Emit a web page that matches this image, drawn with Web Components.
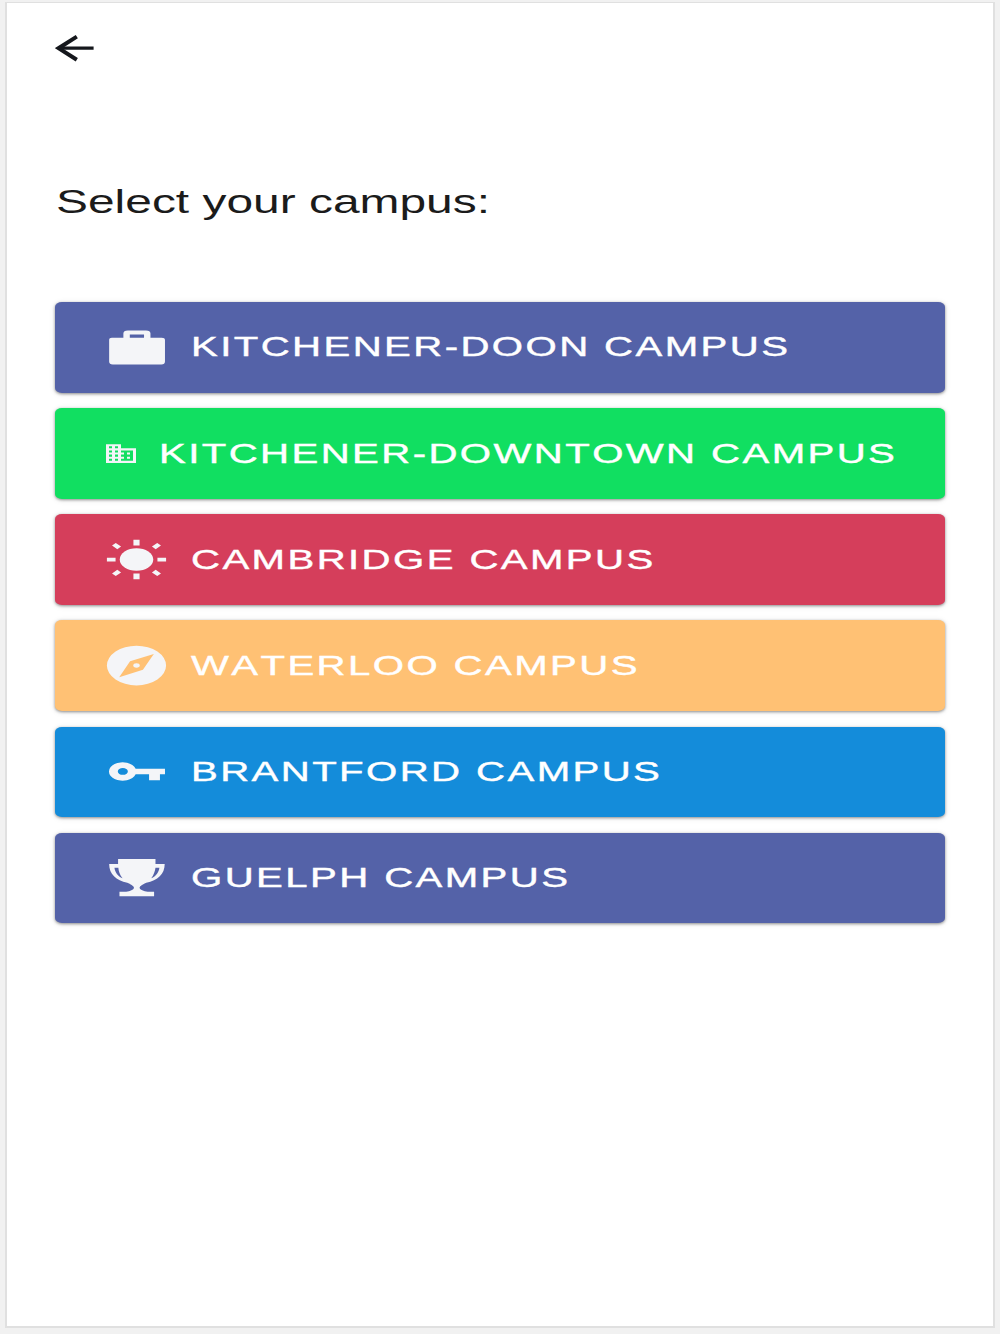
<!DOCTYPE html>
<html lang="en">
<head>
<meta charset="utf-8">
<title>Select your campus</title>
<style>
  body {
    margin: 0;
    background: #f1f1f1;
    font-family: "Liberation Sans", Arial, sans-serif;
  }
</style>
</head>
<body>
<campus-page>
  <back-button slot="header"></back-button>
  <wide-text slot="title">Select your campus:</wide-text>
  <campus-button icon="briefcase" color="primary">KITCHENER-DOON CAMPUS</campus-button>
  <campus-button icon="business" color="success" compact>KITCHENER-DOWNTOWN CAMPUS</campus-button>
  <campus-button icon="sunny" color="danger">CAMBRIDGE CAMPUS</campus-button>
  <campus-button icon="compass" color="warning">WATERLOO CAMPUS</campus-button>
  <campus-button icon="key" color="secondary">BRANTFORD CAMPUS</campus-button>
  <campus-button icon="trophy" color="primary">GUELPH CAMPUS</campus-button>
</campus-page>

<script>
const ICONS = {
  briefcase: `<path fill-rule="evenodd" d="M7.3 6.8V4.5Q7.3 2.9 8.9 2.9H15.4Q17 2.9 17 4.5V6.8H21Q22.2 6.8 22.2 8V19.5Q22.2 21.1 20.9 21.1H3.5Q2.2 21.1 2.2 19.5V8Q2.2 6.8 3.2 6.8ZM9.6 5V6.8H14.7V5Z"/>`,
  business: `<path d="M12 7V3H2v18h20V7H12zM6 19H4v-2h2v2zm0-4H4v-2h2v2zm0-4H4V9h2v2zm0-4H4V5h2v2zm4 12H8v-2h2v2zm0-4H8v-2h2v2zm0-4H8V9h2v2zm0-4H8V5h2v2zm10 12h-8v-2h2v-2h-2v-2h2v-2h-2V9h8v10zm-2-8h-2v2h2v-2zm0 4h-2v2h2v-2z"/>`,
  sunny: `<circle cx="12" cy="12" r="6"/>
    <path d="M10.9 1.5h2.2v3h-2.2zM10.9 19.5h2.2v3h-2.2zM1.4 11h3.1v2H1.4zM19.5 11h3.1v2h-3.1z"/>
    <path stroke-width="1.9" d="M18.2 5.8l1.9-1.9M5.8 5.8l-1.9-1.9M18.2 18.2l1.9 1.9M5.8 18.2l-1.9 1.9"/>`,
  compass: `<path fill-rule="evenodd" d="M12 1.4a10.6 10.6 0 1 0 0 21.2 10.6 10.6 0 0 0 0-21.2zM14.3 14.3L5.8 18.2 9.7 9.7 18.2 5.8z"/>
    <circle cx="12" cy="12" r="1.15"/>`,
  key: `<path fill-rule="evenodd" d="M11.7 10.5A4.9 4.9 0 1 0 11.7 13.5H16.5V16.7H20.4V13.5H22.2V10.5ZM7.1 10.2a1.8 1.8 0 1 1 0 3.6 1.8 1.8 0 0 1 0-3.6z"/>`,
  trophy: `<path fill-rule="evenodd" d="M5.4 2.1H18.8V4.8H22.1C22.1 10.2 19.6 13.6 15.5 14.8 14.5 15.5 13.2 16.4 13.1 17.5 13.2 18.7 14.6 19.3 16 19.6H18.3V22H5.9V19.6H8.3C9.7 19.3 11 18.7 11.1 17.5 11 16.4 9.8 15.5 8.7 14.8 4.7 13.6 2.2 10.2 2.2 4.8H5.4ZM4.1 6.8C4.3 9.3 5.3 11.3 7 12.4 6 10.5 5.6 8.8 5.5 6.8ZM20.2 6.8H18.8C18.6 8.8 18.2 10.5 17.3 12.4 19 11.3 20 9.3 20.2 6.8Z"/>`
};

// Horizontally expanded text; --stretch sets the factor.
class WideText extends HTMLElement {
  constructor() {
    super();
    const shadowRoot = this.attachShadow({mode: 'open'});
    shadowRoot.innerHTML = `<style>
      :host {
        display: block;
        width: max-content;
        white-space: nowrap;
        font-kerning: none;
        transform: scaleX(var(--stretch, 1.46));
        transform-origin: left center;
      }
    </style>
    <slot></slot>`;
  }
}
window.customElements.define('wide-text', WideText);

class BackButton extends HTMLElement {
  constructor() {
    super();
    const shadowRoot = this.attachShadow({mode: 'open'});
    shadowRoot.innerHTML = `<style>
      :host { display: block; width: 40px; height: 28px; }
      button { display: block; padding: 0; border: 0; background: none; }
      svg { display: block; }
    </style>
    <button aria-label="Back">
      <svg width="40" height="28" viewBox="0 0 40 28" fill="none" stroke="#15171c">
        <path stroke-width="4" d="M21.8 2.6L3.6 14.2 21.8 25.8"/>
        <path stroke-width="3.2" d="M3 14.2H38.6"/>
      </svg>
    </button>`;
  }
}
window.customElements.define('back-button', BackButton);

class CampusIcon extends HTMLElement {
  constructor() {
    super();
    this.attachShadow({mode: 'open'});
  }

  static get observedAttributes() {
    return ['name'];
  }

  attributeChangedCallback(attrName, oldVal, newVal) {
    this.shadowRoot.innerHTML = `<style>
      :host { display: block; flex: none; width: 67px; height: 45px; }
      svg { display: block; width: 100%; height: 100%; fill: #f4f5f8; }
      path[stroke-width] { stroke: #f4f5f8; }
    </style>
    <svg viewBox="0 0 24 24" preserveAspectRatio="none" aria-hidden="true">${ICONS[newVal] || ''}</svg>`;
  }
}
window.customElements.define('campus-icon', CampusIcon);

class CampusButton extends HTMLElement {
  constructor() {
    super();
    const shadowRoot = this.attachShadow({mode: 'open'});
    shadowRoot.innerHTML = `<style>
      :host { display: block; height: 90.5px; --fill: #5462a8; }
      :host([color="success"]) { --fill: #11df61; }
      :host([color="danger"]) { --fill: #d53e5b; }
      :host([color="warning"]) { --fill: #ffc174; }
      :host([color="secondary"]) { --fill: #148cda; }
      button {
        display: flex;
        align-items: center;
        gap: 21px;
        box-sizing: border-box;
        width: 100%;
        height: 100%;
        padding: 0 0 0 48px;
        border: 0;
        border-radius: 7px / 5px;
        background: var(--fill);
        box-shadow: 0 1px 3px rgba(0, 0, 0, .4), 0 1px 6px rgba(0, 0, 0, .1);
        color: #fff;
        font: 27.5px "Liberation Sans", Arial, sans-serif;
        letter-spacing: .06em;
      }
      wide-text { -webkit-text-stroke: .4px #fff; }
      :host([compact]) button { gap: 20px; }
      :host([compact]) campus-icon { width: 36px; height: 25px; }
    </style>
    <button>
      <campus-icon></campus-icon>
      <wide-text><slot></slot></wide-text>
    </button>`;
  }

  connectedCallback() {
    this.shadowRoot.querySelector('campus-icon').setAttribute('name', this.getAttribute('icon'));
  }
}
window.customElements.define('campus-button', CampusButton);

class CampusPage extends HTMLElement {
  constructor() {
    super();
    const shadowRoot = this.attachShadow({mode: 'open'});
    shadowRoot.innerHTML = `<style>
      :host {
        display: block;
        box-sizing: border-box;
        height: 1334px;
        padding: 2px 5px 6px;
        overflow: hidden;
      }
      .page {
        box-sizing: border-box;
        height: 100%;
        padding: 31px 48px 0;
        border: 2px solid #e0e0e0;
        border-top-width: 1px;
        background: #fff;
      }
      header { height: 146px; }
      .title {
        --stretch: 1.43;
        height: 44px;
        margin-left: 1px;
        font-size: 33.5px;
        line-height: 44px;
        color: #1b1b1b;
      }
      .list { display: grid; gap: 15.6px; margin-top: 78.2px; }
    </style>
    <div class="page">
      <header><slot name="header"></slot></header>
      <div class="title"><slot name="title"></slot></div>
      <div class="list"><slot></slot></div>
    </div>`;
  }
}
window.customElements.define('campus-page', CampusPage);
</script>
</body>
</html>
